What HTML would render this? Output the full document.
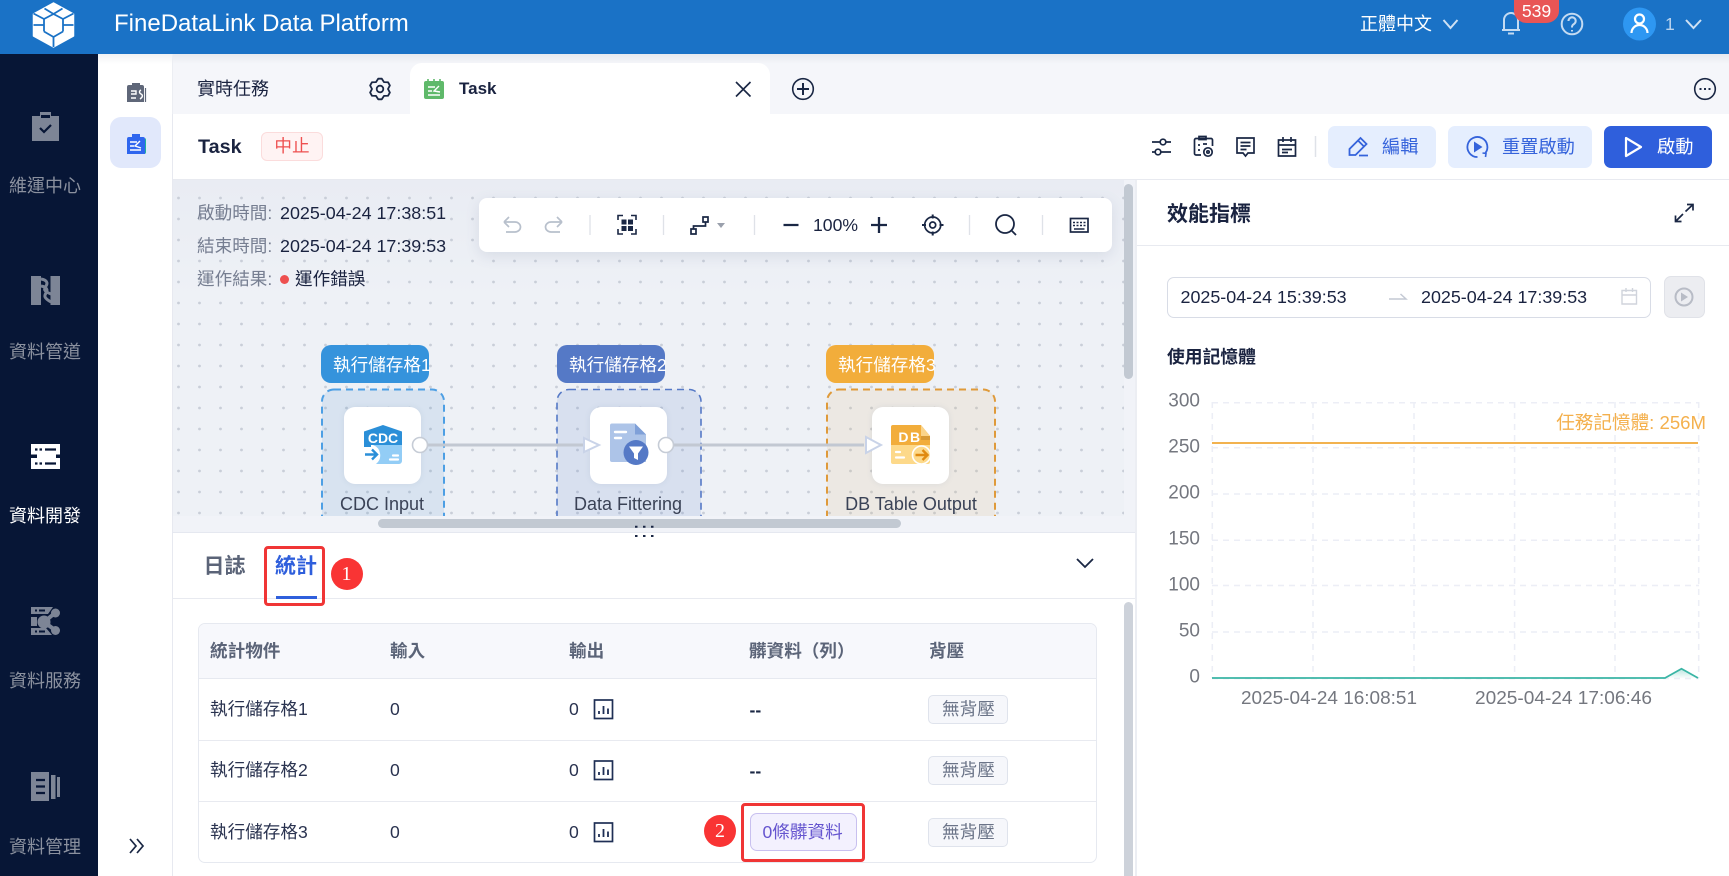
<!DOCTYPE html>
<html lang="zh-Hant">
<head>
<meta charset="utf-8">
<title>FineDataLink Data Platform</title>
<style>
*{box-sizing:border-box}
html,body{margin:0;padding:0;width:1729px;height:876px;overflow:hidden;background:#fff;font-family:"Liberation Sans","Noto Sans CJK TC",sans-serif;color:#1a2340}
.a{position:absolute}
.t{position:absolute;white-space:nowrap;line-height:24px;font-size:17.6px}
.g{color:#767e91}
.b{font-weight:700}
.nav{position:absolute;left:-4px;width:98px;text-align:center;color:#8b919f;font-size:18px;line-height:24px;white-space:nowrap}
.th{position:absolute;white-space:nowrap;line-height:24px;font-size:17.6px;font-weight:700;color:#5b6478}
.tag{position:absolute;left:928px;width:80px;height:29px;background:#f6f7fb;border:1px solid #dfe3ec;border-radius:5px;color:#6b7488;font-size:17.6px;line-height:27px;padding-left:13px;white-space:nowrap}
.btn{position:absolute;top:126px;height:42px;border-radius:7px;background:#e5eefe}
.pill{position:absolute;top:165px;height:38px;border-radius:10px;color:#fff;font-size:17.6px;line-height:40px;padding-left:12px;white-space:nowrap;width:108px}
.card{position:absolute;top:227px;width:77px;height:77px;background:#fff;border-radius:11px;box-shadow:0 0 6px rgba(120,140,170,.15)}
.lbl{position:absolute;top:312px;text-align:center;font-size:18px;line-height:24px;color:#3a4256;white-space:nowrap}
.red{position:absolute;border:3px solid #f03535;border-radius:4px}
.num{position:absolute;width:32px;height:32px;border-radius:50%;background:#f93434;color:#fff;font-family:"Liberation Serif",serif;font-size:20px;line-height:32px;text-align:center}
</style>
</head>
<body>

<!-- backgrounds -->
<div class="a" style="left:0;top:0;width:1729px;height:54px;background:#1a72c6"></div>
<div class="a" style="left:0;top:54px;width:98px;height:822px;background:#071636"></div>
<div class="a" style="left:98px;top:54px;width:74px;height:822px;background:#fff"></div>
<div class="a" style="left:172px;top:54px;width:1557px;height:60px;background:#f5f6fa"></div>
<div class="a" style="left:98px;top:54px;width:1631px;height:10px;background:linear-gradient(rgba(40,60,90,.07),rgba(40,60,90,0))"></div>
<div class="a" style="left:410px;top:63px;width:360px;height:51px;background:#fff;border-radius:12px 12px 0 0"></div>
<div class="a" style="left:110px;top:117px;width:51px;height:51px;background:#e1e8fb;border-radius:11px"></div>
<div class="a" style="left:172px;top:178.500px;width:1557px;height:1.500px;background:#e8eaf0"></div>
<div class="btn" style="left:1327.500px;width:108px"></div>
<div class="btn" style="left:1448px;width:144px"></div>
<div class="btn" style="left:1604px;width:108px;background:#2f5fdc"></div>

<!-- canvas -->
<div class="a" style="left:172px;top:180px;width:964px;height:352px;background:#f1f3f8"></div>
<div class="a" id="cv" style="left:172px;top:180px;width:952px;height:336px;overflow:hidden;background:linear-gradient(#e9ecf3,#eef1f6 35%)">
  <svg class="a" style="left:0;top:0" width="952" height="336">
    <defs><pattern id="dots" x="-4.5" y="7" width="21" height="21" patternUnits="userSpaceOnUse"><circle cx="11" cy="11" r="1.4" fill="#c9ced8"/></pattern></defs>
    <rect width="952" height="336" fill="url(#dots)"/>
    <rect x="150" y="209.500" width="122" height="150" rx="12" fill="#3c82c8" fill-opacity=".12"/>
    <rect x="150" y="209.500" width="122" height="150" rx="12" fill="none" stroke="#4d9fe4" stroke-width="2" stroke-dasharray="7 5"/>
    <rect x="385" y="209.500" width="144" height="150" rx="12" fill="#5579c6" fill-opacity=".14"/>
    <rect x="385" y="209.500" width="144" height="150" rx="12" fill="none" stroke="#5579c6" stroke-width="1.600" stroke-dasharray="7 5"/>
    <rect x="655" y="209.500" width="168" height="150" rx="12" fill="#e1aa5a" fill-opacity=".12"/>
    <rect x="655" y="209.500" width="168" height="150" rx="12" fill="none" stroke="#df9a3a" stroke-width="2" stroke-dasharray="7 5"/>
  </svg>
  <div class="pill" style="left:149px;background:#3593dc">執行儲存格1</div>
  <div class="pill" style="left:385px;background:#5579c6">執行儲存格2</div>
  <div class="pill" style="left:654px;background:#f2ad3b">執行儲存格3</div>

  <div class="card" style="left:172px"></div>
  <div class="card" style="left:418px"></div>
  <div class="card" style="left:700px"></div>

  <div class="lbl" style="left:110px;width:200px">CDC Input</div>
  <div class="lbl" style="left:356px;width:200px">Data Fittering</div>
  <div class="lbl" style="left:639px;width:200px">DB Table Output</div>

  <svg class="a" style="left:0;top:0" width="952" height="336">
    <path d="M255 265H412M500 265H692" stroke="#c2c8d2" stroke-width="3" fill="none"/>
    <path d="M412 258 427 265 412 272Z" fill="#fff" stroke="#c9d3e8" stroke-width="2"/>
    <path d="M694 257 709 265 694 273Z" fill="#fff" stroke="#c9d3e8" stroke-width="2"/>
    <circle cx="248" cy="265" r="7.5" fill="#fff" stroke="#c6ccd6" stroke-width="1.6"/>
    <circle cx="494" cy="265" r="7.5" fill="#fff" stroke="#c6ccd6" stroke-width="1.6"/>
    <!-- CDC icon -->
    <path d="M192 251.500 211 245 230 251.500V265H192Z" fill="#2b8fd8"/>
    <path d="M192 265h9a11 11 0 0 1 3 19H227a3 3 0 0 0 3-3V265Z" fill="#93cdf6"/>
    <path d="M192 265h7v2h-7Z" fill="#2b8fd8"/>
    <path d="M193 274.500H205M200 269.500l5 5-5 5" stroke="#2b8fd8" stroke-width="2.400" fill="none"/>
    <path d="M221 275.500h5M218 279.500h8" stroke="#fff" stroke-width="2.200" stroke-linecap="round"/>
    <text x="211" y="263" text-anchor="middle" fill="#fff" font-family="Liberation Sans" font-weight="700" font-size="14">CDC</text>
    <!-- Filter icon -->
    <path d="M438 245.500a2 2 0 0 1 2-2h23l11 11V282H440a2 2 0 0 1-2-2Z" fill="#adc4e8"/>
    <path d="M463 243.500 474 254.500H463Z" fill="#7fa0d8"/>
    <path d="M443 252h11M443 258h6" stroke="#fff" stroke-width="2.400" stroke-linecap="round"/>
    <circle cx="464" cy="272.500" r="12.500" fill="#5579c6"/>
    <path d="M457 266.500H471L466 273.500V280L462 278V273.500Z" fill="#fff"/>
    <!-- DB icon -->
    <path d="M719 247a2 2 0 0 1 2-2h28l9 11v11H719Z" fill="#f2ad3b"/>
    <path d="M719 265H758V282a2 2 0 0 1-2 2H721a2 2 0 0 1-2-2Z" fill="#fdd98a"/>
    <path d="M749 245 758 256H749Z" fill="#fbd489"/>
    <path d="M749 256H758V260H749Z" fill="#d99a35"/>
    <circle cx="749.500" cy="275" r="9" fill="#fdd98a" stroke="#fff" stroke-width="1.600"/>
    <path d="M743.500 275H755M750.500 270l5 5-5 5" stroke="#e08a10" stroke-width="2.400" fill="none"/>
    <path d="M724 272h4M724 277.500h8" stroke="#fff" stroke-width="2.200" stroke-linecap="round"/>
    <text x="738" y="262" text-anchor="middle" fill="#fff" font-family="Liberation Sans" font-weight="700" font-size="14" letter-spacing="1.500">DB</text>
  </svg>
</div>
<div class="a" style="left:171.500px;top:54px;width:1.500px;height:822px;background:#e7e9f0"></div>
<div class="a" style="left:1124px;top:184px;width:9px;height:195px;background:#c2c9d2;border-radius:5px"></div>
<div class="a" style="left:378px;top:519px;width:523px;height:9px;background:#c2c9d2;border-radius:5px"></div>
<div class="a" style="left:172px;top:532px;width:964px;height:1px;background:#e5e8f0"></div>
<div class="a" style="left:1135px;top:180px;width:1.500px;height:696px;background:#eceef3"></div>
<div class="a" style="left:172px;top:598px;width:963px;height:1px;background:#e8eaf0"></div>
<div class="a" style="left:1137px;top:245px;width:592px;height:1px;background:#e8eaf0"></div>
<div class="a" style="left:171.500px;top:54px;width:1.500px;height:60px;background:#eceef3"></div>

<!-- canvas toolbar -->
<div class="a" style="left:479px;top:198px;width:633px;height:54px;background:#fff;border-radius:8px;box-shadow:0 4px 14px rgba(90,105,140,.14)"></div>

<!-- table -->
<div class="a" style="left:197.500px;top:623px;width:899px;height:240px;border:1px solid #e6e9f0;border-radius:7px;overflow:hidden;background:#fff">
  <div class="a" style="left:0;top:0;width:100%;height:55px;background:#f7f8fc;border-bottom:1px solid #e6e9f0"></div>
  <div class="a" style="left:0;top:115.500px;width:100%;height:1px;background:#e8eaf0"></div>
  <div class="a" style="left:0;top:176.500px;width:100%;height:1px;background:#e8eaf0"></div>
</div>

<!-- right panel controls -->
<div class="a" style="left:1167px;top:277px;width:484px;height:41px;border:1px solid #d8dce6;border-radius:7px;background:#fff"></div>
<div class="a" style="left:1663.500px;top:276px;width:41px;height:42px;background:#ecedf1;border:1px solid #e0e2e8;border-radius:7px"></div>

<!-- icons -->
<svg class="a" style="left:0;top:0;pointer-events:none" width="1729" height="876" fill="none">
  <!-- logo -->
  <g transform="translate(33,3)">
    <path d="M20.500 0 40.500 11V33L20.500 44 .5 33V11Z" fill="#fff" stroke="#fff" stroke-width="1.500" stroke-linejoin="round"/>
    <path d="M11.500 5.500 20.500 11 29.500 5.500M11 16 20.500 11 30 16M11 16V28.500M30 16V28.500M11 28.500 20.500 34 30 28.500M11 16 .5 10.500M30 16 40.500 10.500M.5 22 11 22M30 22H40.500M20.500 34V44" stroke="#1a72c6" stroke-width="1.800"/>
  </g>
  <!-- nav icons -->
  <path d="M32 116h8v-4h11v4h8v25H32Z" fill="#7d8596"/>
  <path d="M41 115h9v3h-9Z" fill="#071636"/>
  <path d="M40 128l4 4 7-7" stroke="#071636" stroke-width="2.200"/>
  <rect x="31" y="276" width="10" height="29" fill="#7d8596"/>
  <rect x="50.500" y="276" width="9.500" height="29" fill="#7d8596"/>
  <path d="M41 279c6 1 7 4 5 7s-3 5 5 8M41 286c6 1 7 4 5 7s-2 5 5 9" stroke="#7d8596" stroke-width="3"/>
  <rect x="31" y="444" width="29" height="10.500" fill="#fff"/>
  <rect x="31" y="458" width="29" height="11" fill="#fff"/>
  <rect x="37" y="454" width="19" height="4" fill="#fff"/>
  <path d="M35 449.500h2.500M39.500 449.500h2.500M45 449.500h11M35 463.500h2.500M39.500 463.500h2.500M45 463.500h11" stroke="#071636" stroke-width="2.200"/>
  <path d="M31 607h22l-5 7H31ZM31 617h6v9h-6ZM31 628h15l6 7H31Z" fill="#7d8596"/>
  <path d="M35 610.500h2M39 610.500h6M35 631.500h2M39 631.500h6" stroke="#071636" stroke-width="2"/>
  <path d="M44 622 55 613M44 622 55 630" stroke="#7d8596" stroke-width="4"/>
  <circle cx="44" cy="622" r="6.500" fill="#7d8596"/>
  <circle cx="55.500" cy="613" r="4.500" fill="#7d8596"/>
  <circle cx="55.500" cy="630.500" r="4.500" fill="#7d8596"/>
  <rect x="31" y="772" width="18" height="29" fill="#7d8596"/>
  <path d="M36 780h9M36 786.500h9M36 793h9" stroke="#071636" stroke-width="2.200"/>
  <rect x="51" y="775" width="4.500" height="24" fill="#7d8596"/>
  <rect x="57" y="777" width="3" height="20" fill="#7d8596"/>

  <!-- second rail -->
  <path d="M127 87a2 2 0 0 1 2-2h3v-2h8v2h2a2 2 0 0 1 2 2v15h-17Z" fill="#5f6779"/>
  <path d="M145.500 88v14" stroke="#5f6779" stroke-width="1.200"/>
  <path d="M131 91h5v3h-5M131 98h5M141 90c-2 1-2 3 0 4M141 94c2 1 2 3-1 5" stroke="#fff" stroke-width="1.400"/>
  <path d="M127 139a2 2 0 0 1 2-2h3v-3h8v3h3a2 2 0 0 1 2 2v15h-18Z" fill="#2f66ee"/>
  <path d="M145 138a2 2 0 0 1 1 2v12a2 2 0 0 1-1 2Z" fill="#20b39a"/>
  <path d="M130 142h7M130 146h4M130 150h11M140 141l-5 5 6 2" stroke="#fff" stroke-width="1.400"/>
  <path d="M130 846m0-7 6 7-6 7M137 839l6 7-6 7" stroke="#1a2744" stroke-width="1.700"/>

  <!-- tabs -->
  <g transform="translate(380,89)" stroke="#1a2744" stroke-width="1.800" stroke-linejoin="round">
    <path d="M-1.800-10.300H1.800L4-6.900 8.040-6.750 9.870-3.600 8 0 9.870 3.600 8.040 6.750 4 6.900 1.800 10.300H-1.800L-4 6.900-8.040 6.750-9.870 3.600-8 0-9.870-3.600-8.040-6.750-4-6.900Z"/>
    <circle r="3.300"/>
  </g>
  <path d="M424 83a2 2 0 0 1 2-2h16a2 2 0 0 1 2 2v14a2 2 0 0 1-2 2H426a2 2 0 0 1-2-2Z" fill="#5fb96a"/>
  <path d="M428 79v4M434 79v4M440 79v4" stroke="#5fb96a" stroke-width="1.600"/>
  <path d="M428 87h7M428 91h4M428 95h12M439 86l-5 5 6 1" stroke="#fff" stroke-width="1.400"/>
  <path d="M736 82l14.500 14.500M750.500 82 736 96.500" stroke="#1a2744" stroke-width="1.600"/>
  <circle cx="803" cy="89" r="10.300" stroke="#1a2744" stroke-width="1.600"/>
  <path d="M797 89h12M803 83v12" stroke="#1a2744" stroke-width="2"/>
  <circle cx="1705" cy="89" r="10.300" stroke="#1a2744" stroke-width="1.600"/>
  <path d="M1699.500 89h2M1704 89h2M1708.500 89h2" stroke="#1a2744" stroke-width="2"/>

  <!-- header right -->
  <path d="M1443.500 20l7 8 7-8M1686 20l7.500 8 7.500-8" stroke="#cfe1f4" stroke-width="2"/>
  <path d="M1502 30h18M1504 30V20a7 7 0 0 1 14 0V30M1508 33.500h6" stroke="#c4dbf2" stroke-width="2"/>
  <circle cx="1572" cy="24" r="10.300" stroke="#c4dbf2" stroke-width="2"/>
  <path d="M1568.500 21a3.600 3.600 0 1 1 5.500 3c-1.500 1-2 1.500-2 3.500M1572 30v1.500" stroke="#c4dbf2" stroke-width="2"/>
  <circle cx="1639.500" cy="24" r="16.500" fill="#2e97f2"/>
  <circle cx="1639.500" cy="19" r="4.500" stroke="#fff" stroke-width="2.200"/>
  <path d="M1631.500 33a8 8 0 0 1 16 0" stroke="#fff" stroke-width="2.200"/>

  <!-- toolbar right icons -->
  <g stroke="#1a2744" stroke-width="1.700">
    <path d="M1152 142h8M1166 142h5M1152 152h3M1161 152h10"/>
    <circle cx="1163" cy="142" r="2.800"/><circle cx="1158" cy="152" r="2.800"/>
    <path d="M1201 155h-5a1.500 1.500 0 0 1-1.500-1.500V140a1.500 1.500 0 0 1 1.500-1.500h15a1.500 1.500 0 0 1 1.500 1.500v6"/>
    <path d="M1199 136.500h7v3h-7ZM1198 145h2M1198 150h2M1203 144h4"/>
    <circle cx="1208" cy="152" r="4.200"/><circle cx="1208" cy="152" r="1.200"/>
    <path d="M1237 138h17v15h-6l-2.500 3-2.500-3h-6ZM1240.500 142.500h10M1240.500 146h10M1240.500 149.500h6"/>
    <path d="M1278.500 140h17v16h-17ZM1278.500 145h17M1283 137v5M1291 137v5M1282 149.500h10M1282 152.500h6"/>
  </g>
  <path d="M1315.500 136v21" stroke="#dfe2e8" stroke-width="1.500"/>
  <!-- buttons icons -->
  <path d="M1349.500 155v-6l11-11 6 6-11 11ZM1358.500 141l6 6M1359 155.500h9" stroke="#3563db" stroke-width="1.800"/>
  <path d="M1485 153.500a10 10 0 1 0-7.500 3.500" stroke="#3563db" stroke-width="1.800"/>
  <path d="M1474 141.500l8.500 5.500-8.500 5.500Z" fill="#3563db"/>
  <path d="M1482.500 153l3.500 .5-.5 3.500" stroke="#3563db" stroke-width="1.600"/>
  <path d="M1626 138l15 9-15 9Z" stroke="#fff" stroke-width="2.200" stroke-linejoin="round"/>

  <!-- canvas toolbar icons -->
  <path d="M504 222l5-5M504 222l5 5M504 222H515a5.500 5 0 0 1 0 10H506M562 222l-5-5M562 222l-5 5M562 222H551a5.500 5 0 0 0 0 10H560" stroke="#b8c0cc" stroke-width="1.700"/>
  <path d="M590 215v20M663.500 215v20M754.500 215v20M969.500 215v20M1042.500 215v20" stroke="#dfe2e8" stroke-width="1.300"/>
  <path d="M618 220v-4.500h5M631 215.500h5v4.500M636 229v5h-5M623 234h-5v-5" stroke="#1a2744" stroke-width="1.600"/>
  <path d="M621.500 219.500h5v5h-5ZM628 219.500h5v5h-5ZM621.500 226h5v5h-5ZM628 226h5v5h-5Z" fill="#1a2744"/>
  <path d="M703 217h5v5h-5ZM691 229h5v5h-5ZM705.500 222V226H693.500V229" stroke="#1a2744" stroke-width="1.700"/>
  <path d="M717 223h8l-4 5Z" fill="#9aa0ac"/>
  <path d="M783.500 225h15M871 225h16M879 217v16" stroke="#1a2744" stroke-width="2.300"/>
  <circle cx="932.700" cy="225" r="8" stroke="#1a2744" stroke-width="1.700"/>
  <circle cx="932.700" cy="225" r="3" stroke="#1a2744" stroke-width="1.700"/>
  <path d="M932.700 214.500v4M932.700 231.500v4M922 225h4M939.500 225h4" stroke="#1a2744" stroke-width="2"/>
  <circle cx="1005" cy="224" r="9" stroke="#1a2744" stroke-width="1.800"/>
  <path d="M1011.500 230.500l4.500 4.500" stroke="#1a2744" stroke-width="1.800"/>
  <rect x="1070.500" y="218.500" width="17.500" height="13.500" stroke="#1a2744" stroke-width="1.700"/>
  <path d="M1073 222.500h2M1076.500 222.500h2M1080 222.500h2M1083.500 222.500h2M1073 225.500h2M1076.500 225.500h2M1080 225.500h2M1083.500 225.500h2M1074 229h10.500" stroke="#1a2744" stroke-width="1.500"/>

  <!-- drag handle -->
  <path d="M635 526.700h2.500M643 526.700h2.500M651 526.700h2.500M635 536h2.500M643 536h2.500M651 536h2.500" stroke="#1a2744" stroke-width="2"/>

  <!-- bottom chevron -->
  <path d="M1077 559l8 8 8-8" stroke="#1a2744" stroke-width="1.800"/>

  <!-- table icons -->
  <g stroke="#1f2f55" stroke-width="1.700">
    <rect x="594.500" y="700" width="18" height="18.500"/>
    <path d="M599 714v-3M603.500 714v-8M608 714v-5.500" stroke-width="1.800"/>
    <rect x="594.500" y="761" width="18" height="18.500"/>
    <path d="M599 775v-3M603.500 775v-8M608 775v-5.500" stroke-width="1.800"/>
    <rect x="594.500" y="823" width="18" height="18.500"/>
    <path d="M599 837v-3M603.500 837v-8M608 837v-5.500" stroke-width="1.800"/>
  </g>

  <!-- right panel icons -->
  <path d="M1685.500 211.500l7.500-7M1687 204.500h6v6M1683 214l-7.500 7.500M1675.500 215.500v6h6" stroke="#1a2744" stroke-width="1.700"/>
  <path d="M1389 299h17l-5.500-5" stroke="#c4c9d4" stroke-width="1.500"/>
  <path d="M1622 290.500h14.500v13.500H1622ZM1622 295h14.500M1626 288v4M1632.500 288v4" stroke="#d0d4dc" stroke-width="1.400"/>
  <circle cx="1684" cy="297" r="8.500" stroke="#b8bcc6" stroke-width="2"/>
  <path d="M1681 292.500l7 4.500-7 4.500Z" fill="#b8bcc6"/>

  <!-- chart -->
  <g stroke="#eceef6" stroke-width="1.500" stroke-dasharray="6 5">
    <path d="M1212 402.700H1699M1212 447.700H1699M1212 494H1699M1212 540.300H1699M1212 585.500H1699M1212 632H1699M1212 678.500H1699"/>
    <path d="M1212.300 402V678M1313 402V678M1414 402V678M1514.600 402V678M1615 402V678M1698.700 402V678"/>
  </g>
  <path d="M1212 443H1698" stroke="#f2b24f" stroke-width="2"/>
  <defs><linearGradient id="gf" x1="0" y1="0" x2="0" y2="1"><stop offset="0" stop-color="#3ab5a5" stop-opacity=".35"/><stop offset="1" stop-color="#3ab5a5" stop-opacity=".03"/></linearGradient></defs>
  <path d="M1665 678 1681.500 668.700 1698 678Z" fill="url(#gf)"/>
  <path d="M1212 678H1665L1681.500 668.700 1698 678" stroke="#3ab5a5" stroke-width="1.700"/>
  <g font-family="Liberation Sans" font-size="19" fill="#74777f" text-anchor="end">
    <text x="1200" y="406.500">300</text>
    <text x="1200" y="452.500">250</text>
    <text x="1200" y="498.500">200</text>
    <text x="1200" y="544.500">150</text>
    <text x="1200" y="590.500">100</text>
    <text x="1200" y="636.500">50</text>
    <text x="1200" y="682.500">0</text>
  </g>
  <g font-family="Liberation Sans" font-size="18.500" fill="#74777f">
    <text x="1241" y="704" textLength="176" lengthAdjust="spacingAndGlyphs">2025-04-24 16:08:51</text>
    <text x="1475" y="704" textLength="177" lengthAdjust="spacingAndGlyphs">2025-04-24 17:06:46</text>
  </g>
  <text x="1706" y="429" text-anchor="end" font-family="Liberation Sans,Noto Sans CJK TC,sans-serif" font-size="18.600" fill="#f4b04d">任務記憶體: 256M</text>
</svg>

<!-- header text -->
<div class="t" style="left:114px;top:12px;color:#fff;font-size:24px">FineDataLink Data Platform</div>
<div class="t" style="left:1360px;top:12px;color:#fff;font-size:18px">正體中文</div>
<div class="a" style="left:1514px;top:0;width:45px;height:23px;background:#e85555;border-radius:0 0 13px 13px / 0 0 12px 12px;color:#fff;font-size:17.6px;line-height:23px;text-align:center">539</div>
<div class="t" style="left:1665px;top:12px;color:#b9d3ee;font-size:17.6px">1</div>

<!-- sidebar labels -->
<div class="nav" style="top:174px">維運中心</div>
<div class="nav" style="top:340px">資料管道</div>
<div class="nav" style="top:504px;color:#fff">資料開發</div>
<div class="nav" style="top:669px">資料服務</div>
<div class="nav" style="top:835px">資料管理</div>

<!-- tabs -->
<div class="t" style="left:197px;top:77px;font-size:18px">實時任務</div>
<div class="t b" style="left:459px;top:77px;font-size:17px">Task</div>

<!-- toolbar -->
<div class="t b" style="left:198px;top:135px;font-size:19.8px">Task</div>
<div class="a" style="left:261px;top:132px;width:62px;height:29px;background:#fff3f3;border:1px solid #fbdcdc;border-radius:6px;color:#ee5050;font-size:17.6px;line-height:27px;text-align:center">中止</div>
<div class="t" style="left:1382px;top:135px;color:#3563db;font-size:18.2px">編輯</div>
<div class="t" style="left:1502px;top:135px;color:#3563db;font-size:18.2px">重置啟動</div>
<div class="t" style="left:1657px;top:135px;color:#fff;font-size:18.2px">啟動</div>

<!-- canvas text -->
<div class="t g" style="left:197px;top:201px;">啟動時間:</div>
<div class="t" style="left:280px;top:201px;font-size:17.9px">2025-04-24 17:38:51</div>
<div class="t g" style="left:197px;top:234px;">結束時間:</div>
<div class="t" style="left:280px;top:234px;font-size:17.9px">2025-04-24 17:39:53</div>
<div class="t g" style="left:197px;top:267px;">運作結果:</div>
<div class="a" style="left:280px;top:275px;width:9px;height:9px;border-radius:50%;background:#ee5050"></div>
<div class="t" style="left:295px;top:267px;">運作錯誤</div>
<div class="t" style="left:813px;top:213px;">100%</div>

<!-- bottom tabs -->
<div class="t b" style="left:203.500px;top:555px;font-size:21px;color:#5b6478">日誌</div>
<div class="t b" style="left:275px;top:555px;font-size:21px;color:#2f5fdc">統計</div>
<div class="a" style="left:275.500px;top:596px;width:41.500px;height:3px;background:#2f5fdc"></div>
<div class="red" style="left:264px;top:546px;width:61px;height:60px"></div>
<div class="num" style="left:330.500px;top:558px">1</div>

<!-- table text -->
<div class="th" style="left:210px;top:639px">統計物件</div>
<div class="th" style="left:390px;top:639px">輸入</div>
<div class="th" style="left:569px;top:639px">輸出</div>
<div class="th" style="left:749px;top:639px">髒資料（列）</div>
<div class="th" style="left:929px;top:639px">背壓</div>

<div class="t" style="left:210px;top:697px;color:#2a3350">執行儲存格1</div>
<div class="t" style="left:390px;top:697px;color:#2a3350">0</div>
<div class="t" style="left:569px;top:697px;color:#2a3350">0</div>
<div class="t b" style="left:749.500px;top:698px;color:#1a2744">--</div>
<div class="tag" style="top:695px">無背壓</div>

<div class="t" style="left:210px;top:758px;color:#2a3350">執行儲存格2</div>
<div class="t" style="left:390px;top:758px;color:#2a3350">0</div>
<div class="t" style="left:569px;top:758px;color:#2a3350">0</div>
<div class="t b" style="left:749.500px;top:759px;color:#1a2744">--</div>
<div class="tag" style="top:756px">無背壓</div>

<div class="t" style="left:210px;top:820px;color:#2a3350">執行儲存格3</div>
<div class="t" style="left:390px;top:820px;color:#2a3350">0</div>
<div class="t" style="left:569px;top:820px;color:#2a3350">0</div>
<div class="tag" style="top:818px">無背壓</div>

<div class="a" style="left:749.500px;top:813px;width:107.500px;height:38px;background:#f3f1fe;border:1px solid #c8c0ef;border-radius:7px;color:#6555cf;font-size:17.6px;line-height:36px;padding-left:12px;white-space:nowrap">0條髒資料</div>
<div class="red" style="left:741px;top:803px;width:124px;height:58.500px"></div>
<div class="num" style="left:704px;top:815px">2</div>

<!-- lower scrollbar -->
<div class="a" style="left:1124px;top:602px;width:9px;height:274px;background:#cdd2da;border-radius:5px 5px 0 0"></div>

<!-- right panel text -->
<div class="t b" style="left:1167px;top:202.500px;font-size:21px">效能指標</div>
<div class="t" style="left:1180.500px;top:285px;font-size:17.9px">2025-04-24 15:39:53</div>
<div class="t" style="left:1421px;top:285px;font-size:17.9px">2025-04-24 17:39:53</div>
<div class="t b" style="left:1167px;top:345px;font-size:17.8px">使用記憶體</div>

</body>
</html>
